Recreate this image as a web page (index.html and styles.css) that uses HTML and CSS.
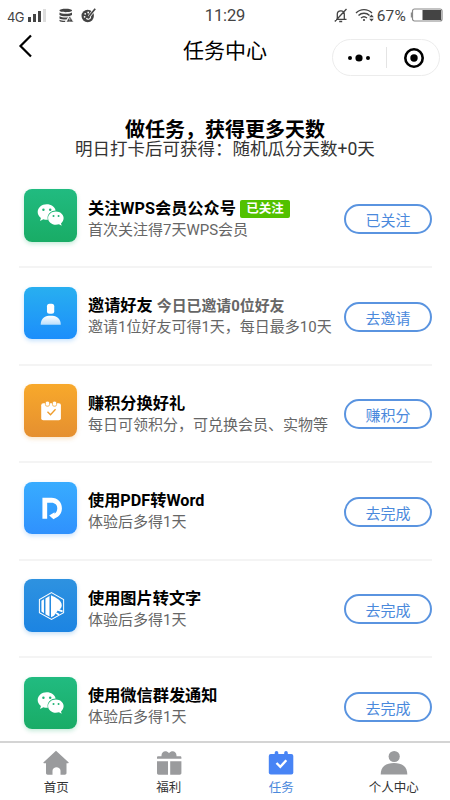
FILE: index.html
```html
<!DOCTYPE html>
<html lang="zh-CN">
<head>
<meta charset="utf-8">
<meta name="viewport" content="width=device-width, initial-scale=1">
<title>任务中心</title>
<link rel="stylesheet" href="styles.css">
</head>
<body>
<svg class="defs" width="0" height="0" aria-hidden="true">
  <defs>
    <linearGradient id="fade" x1="0" y1="0" x2="0" y2="1"><stop offset="0" stop-color="#fff"/><stop offset="1" stop-color="#b9defc"/></linearGradient>
    <symbol id="wechat" viewBox="0 0 52 52">
      <path fill="#fff" d="M22.2 15.2c-5 0-8.9 3.4-8.9 7.7 0 2.4 1.2 4.5 3.2 5.900l-.8 2.800 3.200-1.600c1.400.5 3 .6 4.500.5a7.500 7.500 0 0 1-.3-2c0-4 3.600-7.100 8-7.200-.7-3.500-4.400-6.100-8.900-6.100z"/>
      <path fill="#fff" d="M31.300 22.200c-4.300 0-7.700 2.900-7.700 6.600s3.400 6.700 7.700 6.700c1.100 0 2.100-.2 3.100-.5l2.700 1.500-.7-2.400c1.600-1.200 2.600-3.200 2.600-5.300 0-3.700-3.400-6.600-7.700-6.600z"/>
      <g fill="#1fb475"><circle cx="19" cy="20.500" r="1.200"/><circle cx="25.700" cy="20.500" r="1.200"/><circle cx="29" cy="26.700" r="1"/><circle cx="34" cy="26.700" r="1"/></g>
    </symbol>
  </defs>
</svg>
<div class="phone">
  <header class="status">
    <div class="status-left">
      <span class="net">4G</span>
      <svg width="19" height="15" viewBox="0 0 19 15"><g fill="#444"><rect x="0" y="9" width="3" height="5"/><rect x="5" y="6" width="3" height="8"/><rect x="10" y="3" width="3" height="11"/></g><rect x="15" y="1" width="3" height="13" fill="#ddd"/></svg>
      <svg class="db" width="15" height="15" viewBox="0 0 15 15"><path fill="#444" d="M.5 2.500C.5.3 13 .3 13 2.500S.5 4.700.5 2.500zM.5 4.500c2 1.700 10.500 1.700 12.500 0V7C11 8.700 2.500 8.700.5 7zM.5 8.300c2 1.300 6 1.400 8.500 1L7.500 11.500C5 11.600 1.500 11.300.5 10.500zM.5 11.700c1.500.9 4 1.200 6 1.100L6 14c-2 .1-5-.2-5.500-1z"/><path d="M10.800 8l3.700 6H7.200z" fill="#444" stroke="#fff" stroke-width=".6"/><path d="M10.800 10v2M10.800 12.600v.7" stroke="#fff" stroke-width=".7"/></svg>
      <svg class="disc" width="15" height="15" viewBox="0 0 15 15"><circle cx="6.700" cy="8" r="6.200" fill="#444"/><g fill="#fff"><circle cx="4.200" cy="5.800" r=".9"/><circle cx="7.200" cy="4.500" r=".9"/><circle cx="3.600" cy="8.800" r=".9"/></g><path d="M14 1L7.500 8.500M5.500 10c.5 2 4 1.500 4.200-1.200" stroke="#fff" stroke-width="1.100" fill="none"/><path d="M14.200 .8L8 8.500" stroke="#fff" stroke-width="2.800"/><path d="M14.200 .8L7.500 9" stroke="#444" stroke-width="1.700"/></svg>
    </div>
    <span class="time">11:29</span>
    <div class="status-right">
      <svg width="14" height="15" viewBox="0 0 14 15" fill="none" stroke="#444" stroke-width="1.300"><path d="M2 11.300h10.500M3.300 11V6c0-3.800 7-4.600 7 0v5M5.200 13.500h3M.8 13.500L12.500 1"/></svg>
      <svg class="wifi" width="20" height="15" viewBox="0 0 20 15" fill="none" stroke="#444" stroke-width="1.400"><path d="M1 5c4.500-4.500 11.500-4.500 16 0M3.500 7.500c3-3 8-3 11 0M6 10c2-1.800 4-1.800 6 0"/><circle cx="9" cy="12" r="1.100" fill="#444" stroke="none"/><path fill="#444" stroke="none" d="M16.500 6.500L18.800 9.300h-4.600zM16.500 13.500l-2.300-2.800h4.600z"/></svg>
      <span class="percent">67%</span>
      <svg class="battery" width="33" height="14" viewBox="0 0 33 14"><path d="M2 4.500H.8v5H2" fill="#888"/><rect x="2.500" y="1" width="29.500" height="12" rx="2" fill="#fff" stroke="#888" stroke-width="1.200"/><rect x="12.500" y="2" width="18.500" height="10" fill="#444"/></svg>
    </div>
  </header>

  <nav class="navbar">
    <svg class="back" width="14" height="24" viewBox="0 0 14 24"><path d="M13 1.500L2.500 12 13 22.500" fill="none" stroke="#000" stroke-width="2.200"/></svg>
    <h1 class="nav-title">任务中心</h1>
    <div class="capsule">
      <svg width="22" height="8" viewBox="0 0 22 8"><circle cx="2" cy="4" r="2"/><circle cx="11" cy="4" r="3.600"/><circle cx="20" cy="4" r="2"/></svg>
      <span class="capsule-line"></span>
      <svg width="22" height="22" viewBox="0 0 22 22"><circle cx="11" cy="11" r="8.700" fill="none" stroke="#000" stroke-width="2.600"/><circle cx="11" cy="11" r="3.700"/></svg>
    </div>
  </nav>

  <section class="intro">
    <h2 class="intro-title">做任务，获得更多天数</h2>
    <p class="intro-sub">明日打卡后可获得：随机瓜分天数+0天</p>
  </section>

  <main class="tasks">
    <article class="task">
      <div class="icon green"><svg viewBox="0 0 52 52"><use href="#wechat"/></svg></div>
      <div class="info"><h3 class="name">关注WPS会员公众号<span class="tag">已关注</span></h3><p class="desc">首次关注得7天WPS会员</p></div>
      <button class="action">已关注</button>
    </article>
    <article class="task">
      <div class="icon sky"><svg viewBox="0 0 52 52"><rect x="22.500" y="16.500" width="7.200" height="10" rx="2.500" fill="#fff"/><path fill="url(#fade)" d="M16.300 37.500c0-5.500 3.500-9 8-9h3.700c4.500 0 8.200 3.500 8.200 9z"/></svg></div>
      <div class="info"><h3 class="name">邀请好友<span class="note">今日已邀请0位好友</span></h3><p class="desc">邀请1位好友可得1天，每日最多10天</p></div>
      <button class="action">去邀请</button>
    </article>
    <article class="task">
      <div class="icon orange"><svg viewBox="0 0 52 52"><rect x="16.800" y="19" width="19.500" height="17" rx="2" fill="#fff"/><g fill="#fff" stroke="#f0a02c" stroke-width=".7"><rect x="21" y="17" width="4" height="5" rx="1.500"/><rect x="28" y="17" width="4" height="5" rx="1.500"/></g><path d="M23 27.500l3 3 5-5.500" fill="none" stroke="#ef9c2b" stroke-width="1.300"/></svg></div>
      <div class="info"><h3 class="name">赚积分换好礼</h3><p class="desc">每日可领积分，可兑换会员、实物等</p></div>
      <button class="action">赚积分</button>
    </article>
    <article class="task">
      <div class="icon azure"><svg viewBox="0 0 52 52"><path fill="#fff" d="M18 15.700h9c6 0 10.300 4.500 10.300 10.300 0 5-2.800 8.500-6.800 9.900L29 37l-4.300-3.800 5.300-3.300v1.500c1.700-1 2.700-2.900 2.700-5.400 0-3.300-2.200-5.500-5.700-5.500h-4.300v16H18z"/></svg></div>
      <div class="info"><h3 class="name">使用PDF转Word</h3><p class="desc">体验后多得1天</p></div>
      <button class="action">去完成</button>
    </article>
    <article class="task">
      <div class="icon blue"><svg viewBox="0 0 52 52"><path d="M27 13.500l12 6.800v13L27 40l-12-6.700v-13z" fill="none" stroke="#fff" stroke-width="1"/><path fill="#fff" d="M17 21.500l2.500-1.400v13.700L17 32.300zM21 19.200l4-2.300v20.200l-4-2.300zM26.500 16.200c5 2.300 10.700 5 10.700 10 0 2.300-2.200 4.300-4.200 5.300l-3.500 5-3 1.300z"/><path d="M33.500 30.500l4.500 1.500M31.500 33.700l3 1.800" stroke="#fff" stroke-width="1.800"/></svg></div>
      <div class="info"><h3 class="name">使用图片转文字</h3><p class="desc">体验后多得1天</p></div>
      <button class="action">去完成</button>
    </article>
    <article class="task">
      <div class="icon green"><svg viewBox="0 0 52 52"><use href="#wechat"/></svg></div>
      <div class="info"><h3 class="name">使用微信群发通知</h3><p class="desc">体验后多得1天</p></div>
      <button class="action">去完成</button>
    </article>
  </main>

  <footer class="tabs">
    <a class="tab"><svg width="28" height="26" viewBox="0 0 28 26"><path fill="#9a9b9d" d="M14 .8L26.500 12.300c.4.500.2 1-.4 1H24.500V23c0 1-.7 1.700-1.700 1.700h-4.300v-4c0-4.700-8-4.700-8 0v4H5.700C4.700 24.700 4 24 4 23v-9.700H2c-.7 0-.9-.5-.4-1z"/></svg><span>首页</span></a>
    <a class="tab"><svg width="28" height="26" viewBox="0 0 28 26"><g fill="#9a9b9d"><path d="M2 8.800V7.500c0-.8.500-1.200 1.200-1.200h3.300C6 1.500 11-.7 14 3.200c3-3.900 8-1.700 7.500 3.100h3.700c.7 0 1.200.4 1.200 1.200v1.300z"/><path d="M2 11.300h11v13.400H3.700c-1 0-1.700-.7-1.700-1.700zM15.200 11.300h11.200V23c0 1-.7 1.700-1.700 1.700h-9.500z"/></g></svg><span>福利</span></a>
    <a class="tab active"><svg width="28" height="26" viewBox="0 0 28 26"><rect x="1.800" y="4" width="24.500" height="20.500" rx="2" fill="#4884f5"/><path d="M9.500 2.800v4M19 2.800v4" stroke="#4884f5" stroke-width="3.600" stroke-linecap="round"/><path d="M9.500 13l3.800 3.800 6-6.500" fill="none" stroke="#fff" stroke-width="2.400"/></svg><span>任务</span></a>
    <a class="tab"><svg width="28" height="26" viewBox="0 0 28 26"><g fill="#9a9b9d"><circle cx="14.200" cy="6.500" r="5.600"/><path d="M.7 24.500C.7 16.500 6 13 14 13s13.300 3.500 13.300 11.500z"/></g></svg><span>个人中心</span></a>
  </footer>
</div>
</body>
</html>
```

FILE: styles.css
```css
* { box-sizing: border-box; }
body, h1, h2, h3, p { margin: 0; }
body {
  background: #fff;
  color: #000;
  font-family: Roboto, "Noto Sans CJK SC", sans-serif;
  overflow: hidden;
}
svg { display: block; flex: none; }
.defs { position: absolute; }
.phone {
  width: 450px;
  height: 800px;
  display: flex;
  flex-direction: column;
  overflow: hidden;
}
.status {
  height: 30px;
  flex: none;
  display: grid;
  grid-template-columns: 1fr auto 1fr;
  align-items: center;
  padding: 0 7px;
  color: #444;
}
.status-left, .status-right { display: flex; align-items: center; }
.status-right { justify-content: flex-end; }
.net { font: 13px/16px Inter, sans-serif; width: 21px; padding-top: 3px; letter-spacing: -.6px; }
.db { margin-left: 12px; }
.disc { margin-left: 7px; }
.time { font: 16.500px/18px Roboto, sans-serif; letter-spacing: -.1px; padding-top: 2px; }
.wifi { margin-left: 7px; }
.percent { font: 15.500px/18px Roboto, sans-serif; letter-spacing: .2px; margin-left: 2px; padding-top: 1px; }
.battery { margin-left: 4px; }

.navbar {
  height: 50px;
  flex: none;
  display: grid;
  grid-template-columns: 120px 1fr 120px;
  align-items: start;
}
.back { margin: 4px 0 0 18px; }
.nav-title {
  font-size: 21px;
  font-weight: 400;
  line-height: 30px;
  height: 30px;
  margin-top: 6px;
  text-align: center;
}
.capsule {
  width: 108px;
  height: 37px;
  margin: 9px 0 0 2px;
  border: 1px solid #ececec;
  border-radius: 19px;
  display: flex;
  align-items: center;
  justify-content: space-between;
  padding: 0 14px 0 15px;
}
.capsule-line { width: 1px; height: 21px; background: #e4e4e4; }

.intro { height: 90.500px; flex: none; padding-top: 40px; text-align: center; }
.intro-title { font-size: 20px; line-height: 20px; height: 20px; font-weight: 700; }
.intro-sub { font-size: 17.500px; line-height: 18px; height: 18px; color: #333; white-space: nowrap; }

.tasks { flex: 1; min-height: 0; overflow: hidden; padding: 0 18px 0 19px; }
.task {
  height: 97.500px;
  display: flex;
  align-items: flex-start;
  border-bottom: 2px solid #f4f4f4;
  padding: 18.500px 0 0 5px;
}
.icon { width: 53px; height: 52.500px; border-radius: 8px; flex: none; }
.icon svg { width: 100%; height: 100%; }
.green { background: linear-gradient(#21bb80, #19ac66); box-shadow: 0 2px 4px rgba(27, 176, 108, .25); }
.sky { background: linear-gradient(#28aff0, #1c8efb); box-shadow: 0 2px 4px rgba(30, 145, 250, .25); }
.orange { background: linear-gradient(#f8a92b, #e58f30); box-shadow: 0 2px 4px rgba(235, 150, 45, .25); }
.azure { background: linear-gradient(#38acff, #2f91fd); box-shadow: 0 2px 4px rgba(47, 145, 253, .25); }
.blue { background: linear-gradient(#2e92e0, #1c84e2); box-shadow: 0 2px 4px rgba(30, 130, 220, .25); }
.info { flex: 1; min-width: 0; padding: 8.500px 0 0 11px; white-space: nowrap; }
.name {
  height: 22px;
  display: flex;
  align-items: center;
  font-size: 16.200px;
  line-height: 22px;
  font-weight: 700;
}
.tag {
  width: 50px;
  height: 18px;
  margin-left: 4px;
  border-radius: 2px;
  background: #52c100;
  color: #fff;
  font-size: 12.500px;
  line-height: 18px;
  text-align: center;
}
.note { margin-left: 4px; color: #666; font-size: 14.900px; font-weight: 700; }
.desc { font-size: 15px; line-height: 20px; color: #666; }
.action {
  width: 88px;
  height: 30px;
  flex: none;
  margin-top: 15px;
  padding: 4px 0 0;
  border: 2px solid #5a94e0;
  border-radius: 15px;
  background: #fff;
  color: #4a89dc;
  font-family: inherit;
  font-size: 15px;
  line-height: 22px;
}

.tabs {
  height: 59px;
  flex: none;
  display: grid;
  grid-template-columns: repeat(4, 1fr);
  border-top: 2px solid #d4d4d4;
  background: #fff;
}
.tab {
  display: flex;
  flex-direction: column;
  align-items: center;
  padding-top: 7px;
  color: #333;
  font-size: 12.500px;
  line-height: 18px;
}
.tab span { padding-top: 3px; }
.active { color: #4a89dc; }
```
